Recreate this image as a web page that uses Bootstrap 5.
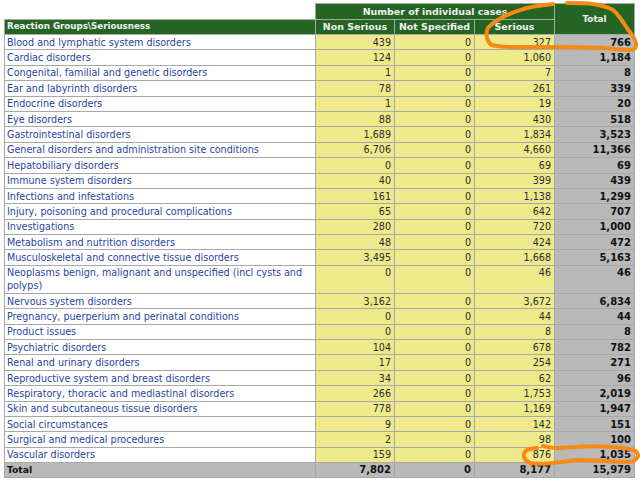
<!DOCTYPE html>
<html><head><meta charset="utf-8">
<link href="https://cdn.jsdelivr.net/npm/bootstrap@5.3.0/dist/css/bootstrap.min.css" rel="stylesheet">
<style>
html,body{background:#fff;margin:0;height:486px;overflow:hidden}
.sheet{position:relative;padding:3px 6px 0 4px;width:640px}
.rtable{width:630px;border-collapse:collapse;table-layout:fixed;font-family:"DejaVu Sans",sans-serif;font-size:9.6px;line-height:13px;color:#2a2a2a}
.rtable th,.rtable td{border:1px solid #a8a8a8;padding:.5px 3px;height:15.4px;vertical-align:middle;overflow:hidden;white-space:nowrap}
.rtable thead th{height:15.5px}
.rtable tbody tr:last-child td{height:15px;line-height:12px}
.rtable tbody tr.tall td{vertical-align:top}
.rtable td.name,.rtable td.foot,.rtable th.first{padding-left:2px;white-space:normal}
.rtable a{color:#1f45a5;text-decoration:none}
.rtable .hd{background:#256524;color:#f0f0f0;font-weight:700;font-size:9.45px}
.rtable th.first{font-size:8.7px}
.rtable th.big{font-size:8.9px}
.rtable th.mid{padding:.5px 0}
.rtable .sp{border:0;background:#fff}
.rtable .num{background:#eeea8c;text-align:right}
.rtable .tot{background:#b9b9b9;text-align:right;font-weight:700;color:#111;font-size:10px}
.rtable .name{background:#fff}
.rtable .foot{background:#b9b9b9;font-weight:700;color:#111;font-size:9.2px}
.scrawl{position:absolute;left:0;top:0;width:640px;height:486px;pointer-events:none}
</style></head><body>
<div class="sheet">
<table class="rtable"><colgroup><col style="width:311px"><col style="width:79px"><col style="width:80px"><col style="width:80px"><col style="width:80px"></colgroup>
<thead>
<tr><th class="sp"></th><th class="hd mid text-center" colspan="3">Number of individual cases</th><th class="hd mid big text-center" rowspan="2">Total</th></tr>
<tr><th class="hd first">Reaction Groups\Seriousness</th><th class="hd mid text-center">Non Serious</th><th class="hd mid text-center">Not Specified</th><th class="hd mid text-center">Serious</th></tr>
</thead>
<tbody id="rows"></tbody>
</table>
<svg class="scrawl" viewBox="0 0 640 486" fill="none" stroke="#f68a12" stroke-width="4" stroke-linecap="round" stroke-linejoin="round">
<path d="M553 4C544 5 534 6 527 8C518 11 510 13 503 17C496 21 491 24 488 28C486 32 486 35 487 38C488 42 490 44 492 45C499 47 506 47 513 47C527 47 540 47 553 47C570 47 586 47 603 48C613 49 622 50 630 50C634 50 636 48 636 45C636 41 634 38 632 35C629 31 626 27 623 22C620 18 617 13 613 10C607 7 600 5 593 4C584 3 576 3 567 3"/>
<path d="M537 448C533 448 530 449 527 450C524 452 523 454 524 457C525 460 527 462 530 463C537 464 545 464 553 463C561 462 569 461 577 460C595 460 612 462 630 462C634 461 637 459 638 456C638 453 636 451 633 450C626 448 618 447 610 447C599 446 588 446 577 447C570 447 564 448 557 448C552 448 548 447 543 446"/>
</svg>
</div>
<script>
var d=[["Blood and lymphatic system disorders","439","0","327","766"],["Cardiac disorders","124","0","1,060","1,184"],["Congenital, familial and genetic disorders","1","0","7","8"],["Ear and labyrinth disorders","78","0","261","339"],["Endocrine disorders","1","0","19","20"],["Eye disorders","88","0","430","518"],["Gastrointestinal disorders","1,689","0","1,834","3,523"],["General disorders and administration site conditions","6,706","0","4,660","11,366"],["Hepatobiliary disorders","0","0","69","69"],["Immune system disorders","40","0","399","439"],["Infections and infestations","161","0","1,138","1,299"],["Injury, poisoning and procedural complications","65","0","642","707"],["Investigations","280","0","720","1,000"],["Metabolism and nutrition disorders","48","0","424","472"],["Musculoskeletal and connective tissue disorders","3,495","0","1,668","5,163"],["Neoplasms benign, malignant and unspecified (incl cysts and polyps)","0","0","46","46"],["Nervous system disorders","3,162","0","3,672","6,834"],["Pregnancy, puerperium and perinatal conditions","0","0","44","44"],["Product issues","0","0","8","8"],["Psychiatric disorders","104","0","678","782"],["Renal and urinary disorders","17","0","254","271"],["Reproductive system and breast disorders","34","0","62","96"],["Respiratory, thoracic and mediastinal disorders","266","0","1,753","2,019"],["Skin and subcutaneous tissue disorders","778","0","1,169","1,947"],["Social circumstances","9","0","142","151"],["Surgical and medical procedures","2","0","98","100"],["Vascular disorders","159","0","876","1,035"]];
var h="";d.forEach(function(r){h+='<tr'+(r[0].indexOf("Neoplasms")==0?' class="tall"':'')+'><td class="name"><a href="#">'+r[0]+'</a></td><td class="num">'+r[1]+'</td><td class="num">'+r[2]+'</td><td class="num">'+r[3]+'</td><td class="tot">'+r[4]+'</td></tr>'});
h+='<tr><td class="foot">Total</td><td class="tot">7,802</td><td class="tot">0</td><td class="tot">8,177</td><td class="tot">15,979</td></tr>';
document.getElementById("rows").innerHTML=h;
</script>
<script src="https://cdn.jsdelivr.net/npm/bootstrap@5.3.0/dist/js/bootstrap.bundle.min.js"></script>
</body></html>
